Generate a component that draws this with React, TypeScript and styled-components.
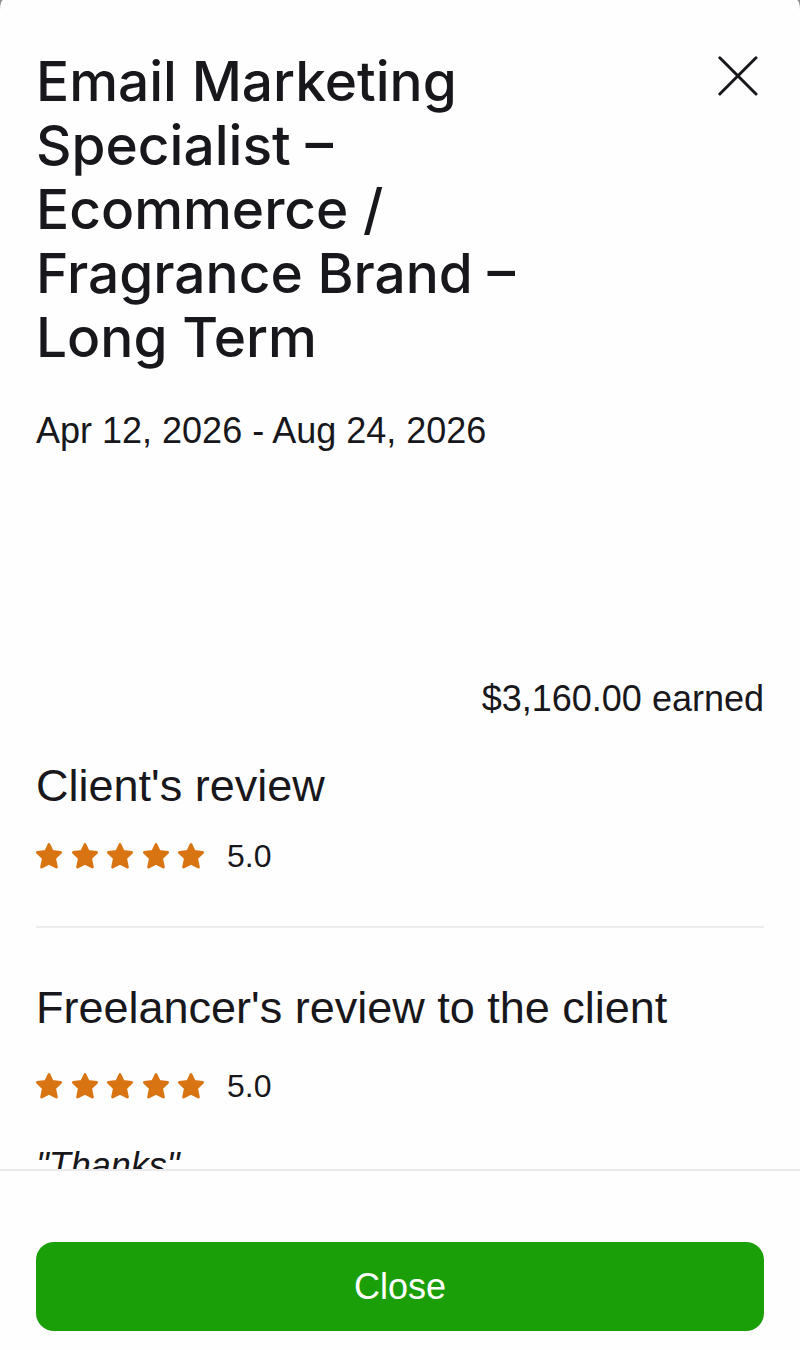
import React from "react";
import styled, { createGlobalStyle } from "styled-components";

const GlobalStyle = createGlobalStyle`
  *, *::before, *::after { box-sizing: border-box; }
  body {
    margin: 0;
    background: #8c8c8e;
    color: #18171b;
    font-family: "Liberation Sans", Arial, Helvetica, sans-serif;
  }
`;

const Sheet = styled.div`
  display: flex;
  flex-direction: column;
  height: 100vh;
  background: #fefefe;
  border-radius: 3px 3px 0 0 / 10px 10px 0 0;
  overflow: hidden;
`;

const Content = styled.main`
  flex: 1;
  min-height: 0;
  padding: 49px 36px 36px;
  overflow-y: auto;
  scrollbar-width: none;
`;

const Header = styled.header`
  display: flex;
  align-items: flex-start;
  justify-content: space-between;
  gap: 36px;
`;

const Title = styled.h1`
  margin: 0;
  max-width: 560px;
  font-family: Inter, "Liberation Sans", Arial, sans-serif;
  font-size: 55px;
  line-height: 64px;
  font-weight: 500;
`;

const IconButton = styled.button`
  display: grid;
  place-items: center;
  flex: none;
  width: 52px;
  height: 54px;
  padding: 0;
  border: 0;
  background: none;
  color: inherit;
  cursor: pointer;
`;

const Text = styled.p<{ $align?: "left" | "right"; $italic?: boolean; $gap: number }>`
  margin: ${({ $gap }) => $gap}px 0 0;
  font-size: 36px;
  line-height: 48px;
  text-align: ${({ $align }) => $align ?? "left"};
  font-style: ${({ $italic }) => ($italic ? "italic" : "normal")};
`;

const Review = styled.section<{ $divided?: boolean }>`
  margin-top: ${({ $divided }) => ($divided ? 50 : 35)}px;
  padding-top: ${({ $divided }) => ($divided ? 52 : 0)}px;
  border-top: ${({ $divided }) => ($divided ? "2px solid #ececee" : "0")};
`;

const Heading = styled.h2`
  margin: 0;
  font-size: 45px;
  line-height: 56px;
  font-weight: 400;
`;

const Rating = styled.div<{ $gap: number }>`
  display: flex;
  align-items: center;
  gap: 22px;
  margin-top: ${({ $gap }) => $gap}px;
  font-size: 32px;
  line-height: 40px;
`;

const StarRow = styled.span`
  display: flex;
  justify-content: space-between;
  width: 169px;
  color: #d97412;
`;

const Footer = styled.footer`
  flex: none;
  padding: 71px 36px 19px;
  border-top: 2px solid #ebe9ec;
`;

const PrimaryButton = styled.button`
  display: block;
  width: 100%;
  height: 89px;
  border: 0;
  border-radius: 18px;
  background: #1b9f08;
  color: #fff;
  font: inherit;
  font-size: 36px;
  cursor: pointer;
`;

const Star = () => (
  <svg width="27" height="27" viewBox="0 0 27 27" aria-hidden="true">
    <path
      d="M13 1.5 16.2 8.4 24.6 9.4 18.6 15.2 20.4 24.1 13 20.2 5.6 24.1 7.4 15.2 1.4 9.4 9.8 8.4Z"
      fill="currentColor"
      stroke="currentColor"
      strokeWidth="2.8"
      strokeLinejoin="round"
    />
  </svg>
);

const Score = ({ value, gap }: { value: number; gap: number }) => (
  <Rating $gap={gap}>
    <StarRow role="img" aria-label={`${value} out of 5 stars`}>
      {Array.from({ length: 5 }, (_, i) => (
        <Star key={i} />
      ))}
    </StarRow>
    <span>{value.toFixed(1)}</span>
  </Rating>
);

export default function App() {
  return (
    <>
      <GlobalStyle />
      <Sheet role="dialog" aria-labelledby="job-title">
        <Content>
          <Header>
            <Title id="job-title">
              Email Marketing Specialist – Ecommerce / Fragrance Brand – Long Term
            </Title>
            <IconButton type="button" aria-label="Dismiss">
              <svg width="40" height="40" viewBox="0 0 40 40" aria-hidden="true">
                <path
                  d="M1.8 1.8 38 38M38 1.8 1.8 38"
                  stroke="currentColor"
                  strokeWidth="3"
                  strokeLinecap="round"
                />
              </svg>
            </IconButton>
          </Header>
          <Text $gap={38}>Apr 12, 2026 - Aug 24, 2026</Text>
          <Text $gap={220} $align="right">
            $3,160.00 earned
          </Text>
          <Review>
            <Heading>Client's review</Heading>
            <Score value={5} gap={22} />
          </Review>
          <Review $divided>
            <Heading>Freelancer's review to the client</Heading>
            <Score value={5} gap={30} />
            <Text $gap={36} $italic>
              "Thanks"
            </Text>
          </Review>
        </Content>
        <Footer>
          <PrimaryButton type="button">Close</PrimaryButton>
        </Footer>
      </Sheet>
    </>
  );
}
